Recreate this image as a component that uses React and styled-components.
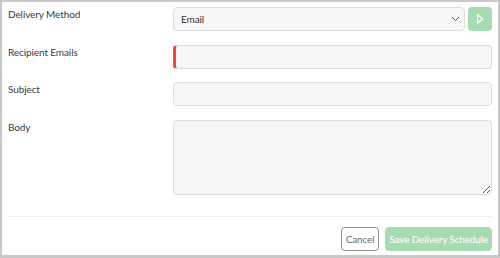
import React from 'react'
import styled, { createGlobalStyle } from 'styled-components'

const GlobalStyle = createGlobalStyle`
  body {
    margin: 0;
    background: #ffffff;
    font-family: Lato, "Open Sans", sans-serif;
  }
`

const Frame = styled.div`
  width: 500px;
  height: 258px;
  box-sizing: border-box;
  border: 2px solid #c9c9c9;
  border-bottom-width: 3px;
  background: #ffffff;
  padding: 5px 6px 0 6px;
  display: flex;
  flex-direction: column;
`

const Form = styled.form`
  display: flex;
  flex-direction: column;
  gap: 13.5px;
`

const Row = styled.div`
  display: grid;
  grid-template-columns: 165px 1fr;
  align-items: start;
`

const Label = styled.label`
  font-size: 10px;
  letter-spacing: -0.1px;
  color: #3a3a3a;
  padding-top: 1px;
  line-height: 13px;
`

const FieldGroup = styled.div`
  display: flex;
  gap: 3px;
`

const SelectWrap = styled.div`
  position: relative;
  flex: 1;
`

const Select = styled.select`
  display: block;
  width: 100%;
  height: 24px;
  box-sizing: border-box;
  appearance: none;
  background: #f7f7f7;
  border: 1px solid #dddddd;
  border-radius: 4px;
  padding: 0 7px;
  font-family: inherit;
  font-size: 10px;
  letter-spacing: -0.1px;
  color: #333333;
  outline: none;
`

const Chevron = styled.svg`
  position: absolute;
  right: 5px;
  top: 9px;
  pointer-events: none;
`

const PlayButton = styled.button`
  width: 24px;
  height: 24px;
  box-sizing: border-box;
  border: none;
  border-radius: 4px;
  background: #a7dcb2;
  display: flex;
  align-items: center;
  justify-content: center;
  padding: 0;
`

const Input = styled.input`
  display: block;
  width: 100%;
  height: 24px;
  box-sizing: border-box;
  background: #f7f7f7;
  border: 1px solid #dddddd;
  border-left: ${({ $invalid }) => ($invalid ? '3px solid #f0463a' : '1px solid #dddddd')};
  border-radius: 4px;
  padding: 0 7px;
  font-family: inherit;
  font-size: 10px;
  outline: none;
`

const TextArea = styled.textarea`
  width: 100%;
  height: 75px;
  box-sizing: border-box;
  background: #f7f7f7;
  border: 1px solid #dddddd;
  border-radius: 4px;
  padding: 4px 7px;
  font-family: inherit;
  font-size: 10px;
  outline: none;
  display: block;
`

const Footer = styled.div`
  margin-top: 21px;
  border-top: 1px solid #eeeeee;
  padding-top: 10px;
  display: flex;
  justify-content: flex-end;
  gap: 6px;
`

const Button = styled.button`
  height: 24px;
  box-sizing: border-box;
  border-radius: 4px;
  font-family: inherit;
  font-size: 10px;
  letter-spacing: -0.15px;
  padding: 0 ${({ $primary }) => ($primary ? '3px' : '4px')};
  border: 1px solid ${({ $primary }) => ($primary ? '#a7dcb2' : '#8f8f8f')};
  background: ${({ $primary }) => ($primary ? '#a7dcb2' : '#ffffff')};
  color: ${({ $primary }) => ($primary ? '#ffffff' : '#6b6b6b')};
`

const App = () => {
  return (
    <>
      <GlobalStyle />
      <Frame>
        <Form>
          <Row>
            <Label>Delivery Method</Label>
            <FieldGroup>
              <SelectWrap>
                <Select defaultValue="email">
                  <option value="email">Email</option>
                </Select>
                <Chevron width="9" height="6" viewBox="0 0 9 6">
                  <path d="M1 1 L4.5 4.5 L8 1" fill="none" stroke="#555" strokeWidth="1" />
                </Chevron>
              </SelectWrap>
              <PlayButton type="button">
                <svg width="8" height="12" viewBox="0 0 8 12">
                  <path d="M1.5 1.5 L6.5 6 L1.5 10.5 Z" fill="none" stroke="#ffffff" strokeWidth="1.3" strokeLinejoin="round" />
                </svg>
              </PlayButton>
            </FieldGroup>
          </Row>
          <Row>
            <Label>Recipient Emails</Label>
            <Input $invalid />
          </Row>
          <Row>
            <Label>Subject</Label>
            <Input />
          </Row>
          <Row>
            <Label>Body</Label>
            <TextArea />
          </Row>
        </Form>
        <Footer>
          <Button type="button">Cancel</Button>
          <Button type="button" $primary>Save Delivery Schedule</Button>
        </Footer>
      </Frame>
    </>
  )
}

export default App
